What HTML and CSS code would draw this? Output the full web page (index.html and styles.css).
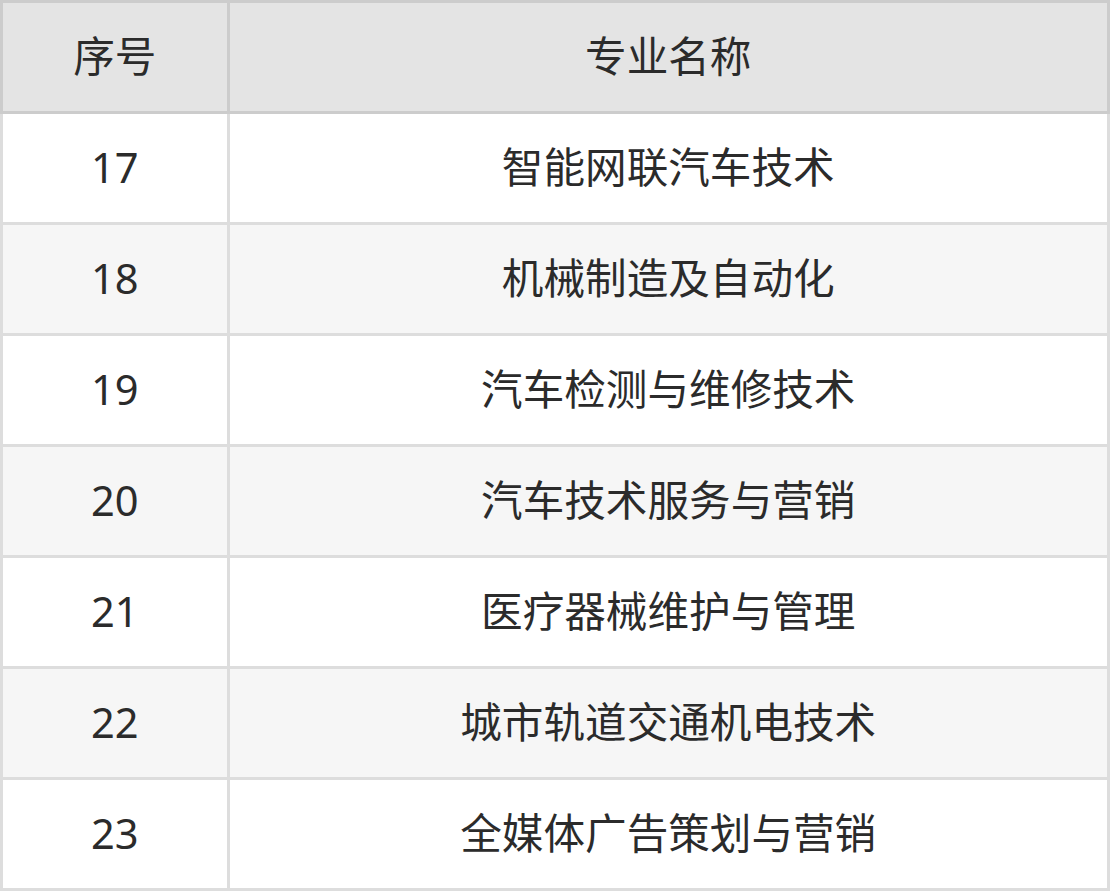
FILE: index.html
```html
<!DOCTYPE html>
<html lang="zh-CN">
<head>
<meta charset="utf-8">
<link rel="stylesheet" href="styles.css">
</head>
<body>
<table class="majors">
  <thead>
    <tr><th class="num">序号</th><th class="name">专业名称</th></tr>
  </thead>
  <tbody>
    <tr><td class="num">17</td><td class="name">智能网联汽车技术</td></tr>
    <tr><td class="num">18</td><td class="name">机械制造及自动化</td></tr>
    <tr><td class="num">19</td><td class="name">汽车检测与维修技术</td></tr>
    <tr><td class="num">20</td><td class="name">汽车技术服务与营销</td></tr>
    <tr><td class="num">21</td><td class="name">医疗器械维护与管理</td></tr>
    <tr><td class="num">22</td><td class="name">城市轨道交通机电技术</td></tr>
    <tr><td class="num">23</td><td class="name">全媒体广告策划与营销</td></tr>
  </tbody>
</table>
</body>
</html>
```
FILE: styles.css
```css
html, body {
  margin: 0;
  padding: 0;
  background: #ffffff;
}
.majors {
  width: 1110px;
  border-collapse: collapse;
  table-layout: fixed;
  font-family: "Noto Sans", "Noto Sans CJK SC", sans-serif;
  font-size: 41.6px;
  color: #2b2b2b;
}
.majors th,
.majors td {
  height: 108px;
  padding: 0;
  text-align: center;
  vertical-align: middle;
  font-weight: normal;
  line-height: 1;
  border: 3px solid #dddddd;
}
.majors th {
  background: #e4e4e4;
  border-color: #cccccc;
}
.majors .num {
  width: 223.5px;
}
.majors tbody tr:nth-child(even) td {
  background: #f6f6f6;
}
```
